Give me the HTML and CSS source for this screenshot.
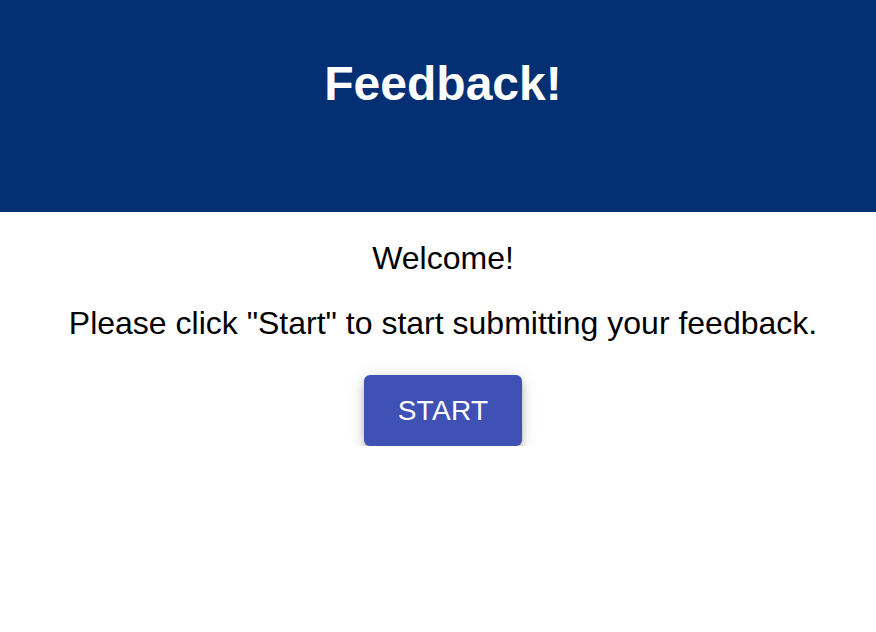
FILE: index.html
```html
<!DOCTYPE html>
<html>
<head>
<meta charset="utf-8">
<link rel="stylesheet" href="styles.css">
</head>
<body>
<header class="header">
  <h1 class="title">Feedback!</h1>
</header>
<main class="content">
  <p class="welcome">Welcome!</p>
  <p class="intro">Please click "Start" to start submitting your feedback.</p>
  <button class="start-btn">START</button>
</main>
</body>
</html>
```
FILE: styles.css
```css
* { box-sizing: border-box; }
html, body {
  margin: 0;
  padding: 0;
  background: #fff;
  font-family: "Liberation Sans", Arial, sans-serif;
}
.header {
  background: #042f73;
  height: 212px;
  display: flex;
  justify-content: center;
  padding-top: 58px;
  padding-left: 10px;
}
.title {
  margin: 0;
  color: #fff;
  font-size: 48px;
  font-weight: bold;
  line-height: 52px;
}
.content {
  display: flex;
  flex-direction: column;
  align-items: center;
  padding-top: 28px;
  padding-left: 10px;
}
.welcome, .intro {
  margin: 0;
  font-size: 32px;
  line-height: 36px;
  color: #000;
  white-space: nowrap;
}
.intro {
  margin-top: 29px;
}
.start-btn {
  margin-top: 34px;
  width: 158px;
  height: 71px;
  border: none;
  border-radius: 6px;
  background: #3f51b5;
  color: #fff;
  font-family: "Liberation Sans", Arial, sans-serif;
  font-size: 28px;
  letter-spacing: 0.3px;
  box-shadow: 0 3px 5px -1px rgba(0,0,0,0.2), 0 6px 10px 0 rgba(0,0,0,0.14), 0 1px 18px 0 rgba(0,0,0,0.12);
  cursor: pointer;
}
```
